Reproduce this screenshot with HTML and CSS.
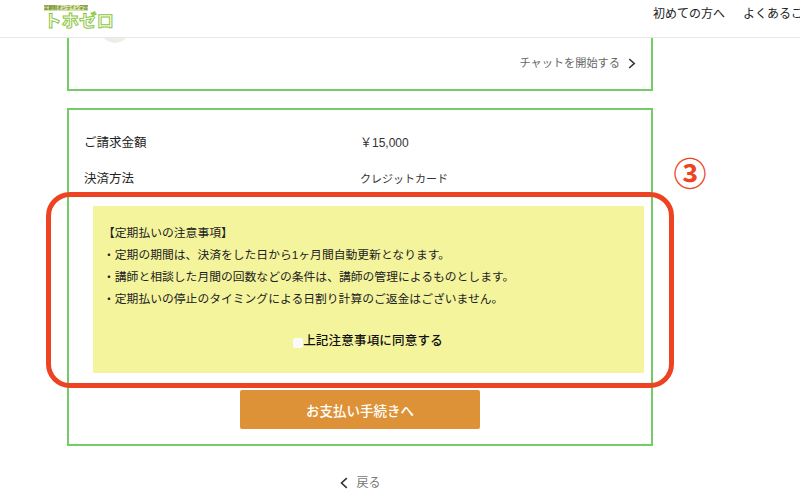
FILE: index.html
```html
<!DOCTYPE html>
<html lang="ja">
<head>
<meta charset="utf-8">
<title>トホゼロ</title>
<link rel="stylesheet" href="styles.css">
</head>
<body>
<header class="site-header">
  <div class="logo">
    <span class="logo-tag">定額制オンライン学習</span>
    <span class="logo-name">トホゼロ</span>
  </div>
  <nav class="site-nav">
    <a>初めての方へ</a>
    <a>よくあるご</a>
  </nav>
</header>
<main class="content">
  <section class="card card-chat">
    <div class="avatar-clip"><div class="avatar"></div></div>
    <a class="chat-link">チャットを開始する
      <svg class="chev" width="8" height="11" viewBox="0 0 8 11"><path d="M1.2 1 6.2 5.5 1.2 10" fill="none" stroke="#333" stroke-width="1.6"/></svg>
    </a>
  </section>
  <section class="card card-pay">
    <div class="row"><span class="row-label">ご請求金額</span><span class="row-value">￥15,000</span></div>
    <div class="row"><span class="row-label">決済方法</span><span class="row-value row-value-small">クレジットカード</span></div>
    <div class="notice">
      <p class="notice-title">【定期払いの注意事項】</p>
      <p>・定期の期間は、決済をした日から1ヶ月間自動更新となります。</p>
      <p>・講師と相談した月間の回数などの条件は、講師の管理によるものとします。</p>
      <p>・定期払いの停止のタイミングによる日割り計算のご返金はございません。</p>
      <label class="agree"><span class="check"></span>上記注意事項に同意する</label>
    </div>
    <button class="pay-btn">お支払い手続きへ</button>
  </section>
  <a class="back">
    <svg width="8" height="12" viewBox="0 0 8 12"><path d="M6.8 1.2 1.5 6 6.8 10.8" fill="none" stroke="#333" stroke-width="1.6"/></svg>
    <span>戻る</span>
  </a>
</main>
<div class="callout"></div>
<div class="callout-num">③</div>
</body>
</html>
```
FILE: styles.css
```css
* { box-sizing: border-box; }
html, body { margin: 0; padding: 0; height: 500px; overflow: hidden; background: #fff; }
body { font-family: "Liberation Sans", "Noto Sans CJK JP", sans-serif; color: #222; position: relative; }
p { margin: 0; }

.site-header { height: 38px; border-bottom: 1px solid #e8e8e8; display: flex; justify-content: space-between; background: #fff; position: relative; z-index: 2; }
.logo { padding: 5px 0 0 44px; display: flex; flex-direction: column; width: 130px; }
.logo-tag { font-size: 4.4px; line-height: 6px; color: #6f8a2c; font-weight: 700; white-space: nowrap; background: #d5e3a6; width: 44px; overflow: hidden; }
.logo-name { font-size: 17.5px; line-height: 20px; font-weight: 700; color: #fff; -webkit-text-stroke: 1px #8cc63f; white-space: nowrap; }
.site-nav { display: flex; gap: 18px; width: 147px; overflow: hidden; white-space: nowrap; font-size: 12px; line-height: 28px; color: #222; flex: none; }
.site-nav a { flex: none; }

.content { width: 586px; margin-left: 67px; }
.card { border: 2px solid #74cc66; }
.card-chat { height: 53px; border-top: 0; position: relative; margin-bottom: 17px; display: flex; justify-content: flex-end; padding: 16px 15px 0 0; }
.avatar-clip { position: absolute; left: 31px; top: 0; width: 30px; height: 5px; overflow: hidden; }
.avatar { width: 30px; height: 30px; margin-top: -25px; border-radius: 50%; background: #efeee6; }
.chat-link { font-size: 11.2px; line-height: 18px; color: #666; display: flex; align-items: center; gap: 8px; height: 18px; }

.card-pay { height: 338px; padding: 16px 7px 0 15px; display: flex; flex-direction: column; }
.row { display: flex; line-height: 18px; height: 36px; padding-top: 8px; }
.row-label { width: 276px; font-size: 12.5px; color: #222; }
.row-value { font-size: 12px; color: #333; }
.row-value-small { font-size: 11px; }

.notice { margin: 8px 0 0 9px; width: 551px; height: 167px; background: #f4f49c; padding: 16px 10px 0; font-size: 11.8px; line-height: 22px; color: #222; }
.agree { display: flex; justify-content: center; align-items: center; margin-top: 20px; font-size: 12.5px; font-weight: 500; color: #111; letter-spacing: 0.2px; padding-right: 1px; }
.check { width: 10px; height: 10px; background: #fafafa; border-radius: 2px; margin-top: 3px; }

.pay-btn { display: block; width: 240px; height: 39px; margin: 17px 0 0 156px; border: 0; border-radius: 2px; background: #de9238; color: #fff; font: 500 13.5px "Noto Sans CJK JP", sans-serif; }

.back { margin-top: 27px; display: flex; justify-content: center; align-items: center; gap: 8px; font-size: 12px; line-height: 20px; color: #777; padding-left: 1px; }

.callout { position: absolute; left: 46px; top: 192px; width: 628px; height: 196px; border: 5px solid #ee4323; border-radius: 24px; }
.callout-num { position: absolute; left: 672px; top: 152px; width: 36px; font-size: 33px; line-height: 40px; text-align: center; color: #ee4323; font-family: "Noto Sans CJK JP", sans-serif; font-weight: 700; }
```
